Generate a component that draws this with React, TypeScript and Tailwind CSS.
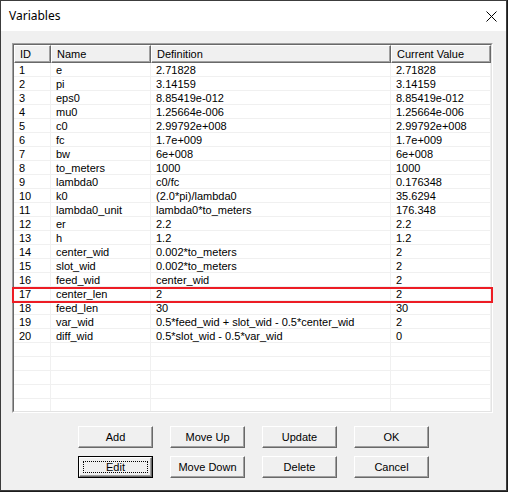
import React from 'react'

const rows: [string, string, string, string][] = [
    ['1', 'e', '2.71828', '2.71828'],
    ['2', 'pi', '3.14159', '3.14159'],
    ['3', 'eps0', '8.85419e-012', '8.85419e-012'],
    ['4', 'mu0', '1.25664e-006', '1.25664e-006'],
    ['5', 'c0', '2.99792e+008', '2.99792e+008'],
    ['6', 'fc', '1.7e+009', '1.7e+009'],
    ['7', 'bw', '6e+008', '6e+008'],
    ['8', 'to_meters', '1000', '1000'],
    ['9', 'lambda0', 'c0/fc', '0.176348'],
    ['10', 'k0', '(2.0*pi)/lambda0', '35.6294'],
    ['11', 'lambda0_unit', 'lambda0*to_meters', '176.348'],
    ['12', 'er', '2.2', '2.2'],
    ['13', 'h', '1.2', '1.2'],
    ['14', 'center_wid', '0.002*to_meters', '2'],
    ['15', 'slot_wid', '0.002*to_meters', '2'],
    ['16', 'feed_wid', 'center_wid', '2'],
    ['17', 'center_len', '2', '2'],
    ['18', 'feed_len', '30', '30'],
    ['19', 'var_wid', '0.5*feed_wid + slot_wid - 0.5*center_wid', '2'],
    ['20', 'diff_wid', '0.5*slot_wid - 0.5*var_wid', '0'],
    ['', '', '', ''],
    ['', '', '', ''],
    ['', '', '', ''],
    ['', '', '', ''],
    ['', '', '', ''],
]

const cols = 'grid grid-cols-[37px_100px_240px_100px]'

function HeaderCell({ label }: { label: string }) {
    return (
        <div className="h-[18px] flex items-center pl-[5px] bg-[#f0f0f0] border-t border-l border-t-white border-l-white border-r border-b border-r-[#696969] border-b-[#696969] shadow-[inset_-1px_-1px_0_#a0a0a0]">
            {label}
        </div>
    )
}

function WinButton({ label, focused }: { label: string; focused?: boolean }) {
    if (focused) {
        return (
            <div className="w-[75px] h-[22px] border border-black">
                <div className="w-full h-full flex items-center justify-center bg-[#f0f0f0] border-t border-l border-t-white border-l-white border-r border-b border-r-[#696969] border-b-[#696969] shadow-[inset_-1px_-1px_0_#a0a0a0] p-[3px]">
                    <div className="w-full h-full flex items-center justify-center border border-dotted border-black">
                        {label}
                    </div>
                </div>
            </div>
        )
    }
    return (
        <div className="w-[75px] h-[22px] flex items-center justify-center bg-[#f0f0f0] border-t border-l border-t-white border-l-white border-r border-b border-r-[#696969] border-b-[#696969] shadow-[inset_-1px_-1px_0_#a0a0a0]">
            {label}
        </div>
    )
}

export default function App() {
    return (
        <div className="w-[508px] h-[492px] bg-[#1c1c1c] overflow-hidden" style={{ fontFamily: '"Liberation Sans", Arial, sans-serif' }}>
            <div className="w-[507px] h-[491px] border border-[#3c3c3c] bg-[#f0f0f0] flex flex-col text-[11px] text-black">
                {/* Title bar */}
                <div className="h-[30px] bg-white flex items-center justify-between pl-[8px] pr-[9px] shrink-0">
                    <span className="text-[12px] text-black" style={{ fontFamily: '"Noto Sans", sans-serif' }}>Variables</span>
                    <svg width="11" height="11" viewBox="0 0 11 11" className="mb-[-1px]">
                        <path d="M0.5 0.5 L10.5 10.5 M10.5 0.5 L0.5 10.5" stroke="#000" strokeWidth="1" />
                    </svg>
                </div>

                {/* Body */}
                <div className="flex flex-col pl-[11px] pt-[12px]">
                    <div className="relative w-[481px] h-[370px]">
                        <div className="w-full h-full border border-t-[#a0a0a0] border-l-[#a0a0a0] border-r-white border-b-white">
                            <div className="w-full h-full border border-t-[#696969] border-l-[#696969] border-r-[#e3e3e3] border-b-[#e3e3e3] bg-white overflow-hidden">
                                <div className={cols}>
                                    <HeaderCell label="ID" />
                                    <HeaderCell label="Name" />
                                    <HeaderCell label="Definition" />
                                    <HeaderCell label="Current Value" />
                                </div>
                                {rows.map((r, i) => (
                                    <div key={i} className={cols + ' h-[14px]'}>
                                        {r.map((c, j) => (
                                            <div key={j} className="h-[14px] leading-[13px] pt-[1px] pl-[5px] border-b border-r border-[#f0f0f0] whitespace-nowrap">
                                                {c}
                                            </div>
                                        ))}
                                    </div>
                                ))}
                            </div>
                        </div>
                        {/* highlighted row */}
                        <div className="absolute left-0 right-0 top-[244px] h-[16px] border-[2px] border-[#ed1c24]" />
                    </div>

                    {/* Buttons */}
                    <div className="flex flex-col gap-[8px] mt-[13px] pl-[66px]">
                        <div className="flex gap-[17px]">
                            <WinButton label="Add" />
                            <WinButton label="Move Up" />
                            <WinButton label="Update" />
                            <WinButton label="OK" />
                        </div>
                        <div className="flex gap-[17px]">
                            <WinButton label="Edit" focused />
                            <WinButton label="Move Down" />
                            <WinButton label="Delete" />
                            <WinButton label="Cancel" />
                        </div>
                    </div>
                </div>
            </div>
        </div>
    )
}
